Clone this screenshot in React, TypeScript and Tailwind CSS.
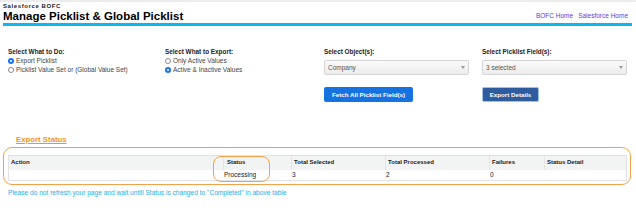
function Radio({ checked, label }: { checked?: boolean; label: string }) {
  return (
    <div className="flex items-center gap-[2px] h-[9px]">
      {checked ? (
        <span className="w-[6px] h-[6px] rounded-full bg-[#1a73e8] flex items-center justify-center">
          <span className="w-[2px] h-[2px] rounded-full bg-white" />
        </span>
      ) : (
        <span className="w-[6px] h-[6px] rounded-full border-[0.5px] border-[#8a8a8a] bg-white" />
      )}
      <span className="text-[6.5px] text-[#444]">{label}</span>
    </div>
  );
}

function Select({ value }: { value: string }) {
  return (
    <div className="mt-[4px] w-[145px] h-[15px] rounded-[2px] border border-[#d4d4d4] bg-gradient-to-b from-[#fafafa] to-[#ececec] flex items-center justify-between px-[3px]">
      <span className="text-[6.5px] text-[#555]">{value}</span>
      <span className="w-0 h-0 border-l-[2.5px] border-r-[2.5px] border-t-[3px] border-l-transparent border-r-transparent border-t-[#999]" />
    </div>
  );
}

const cols = 'grid grid-cols-[214px_68px_94px_104px_55px_1fr]';

export default function App() {
  return (
    <div
      className="w-[636px] h-[208px] bg-white overflow-hidden border-t-2 border-[#ececec]"
      style={{ fontFamily: '"Liberation Sans", Arial, sans-serif' }}
    >
      <div className="flex justify-between items-end px-[3px]">
        <div>
          <div className="text-[6px] font-bold text-[#222] leading-[8px] tracking-[0.6px]">Salesforce BOFC</div>
          <div className="text-[11.5px] font-bold text-black leading-[12px]">Manage Picklist &amp; Global Picklist</div>
        </div>
        <div className="flex gap-[5px] text-[6.5px] text-[#5b3ce6] pr-[5px] pb-[1px]">
          <a>BOFC Home</a>
          <a>Salesforce Home</a>
        </div>
      </div>
      <div className="ml-[3px] w-[629px] h-[3px] bg-[#0cb6f0] mt-[1px]" />

      <div className="grid grid-cols-[157px_159px_158px_1fr] pl-[8px] pt-[21px]">
        <div>
          <div className="text-[6.4px] font-bold text-[#222] leading-[9px]">Select What to Do:</div>
          <Radio checked label="Export Picklist" />
          <Radio label="Picklist Value Set or (Global Value Set)" />
        </div>
        <div>
          <div className="text-[6.4px] font-bold text-[#222] leading-[9px]">Select What to Export:</div>
          <Radio label="Only Active Values" />
          <Radio checked label="Active & Inactive Values" />
        </div>
        <div>
          <div className="text-[6.4px] font-bold text-[#222] leading-[9px]">Select Object(s):</div>
          <Select value="Company" />
          <button className="mt-[12px] w-[89px] h-[15px] rounded-[2px] bg-[#1672e0] text-white text-[6.2px] font-bold">
            Fetch All Picklist Field(s)
          </button>
        </div>
        <div>
          <div className="text-[6.4px] font-bold text-[#222] leading-[9px]">Select Picklist Field(s):</div>
          <Select value="3 selected" />
          <button className="mt-[12px] w-[57px] h-[15px] rounded-[2px] bg-[#2e5c9e] border border-[#9fc0e8] text-white text-[6.2px] font-bold">
            Export Details
          </button>
        </div>
      </div>

      <div className="pl-[16px] pt-[31px] text-[7.8px] font-bold text-[#f7941d] underline leading-[9px]">Export Status</div>

      <div className="mt-[3px] ml-[3px] w-[628px] h-[38px] rounded-[9px] border border-[#f7a04a] pt-[7px] pl-[4px] pr-[3px]">
        <div className="relative border border-[#e2e2e2] text-[6px] text-[#222]">
          <div className={`${cols} h-[14px] bg-[#f2f3f3] font-bold items-center`}>
            <div className="pl-[2px]">Action</div>
            <div className="pl-[3px] border-l border-[#e4e4e4] h-full flex items-center">Status</div>
            <div className="pl-[2px] border-l border-[#e4e4e4] h-full flex items-center">Total Selected</div>
            <div className="pl-[2px] border-l border-[#e4e4e4] h-full flex items-center">Total Processed</div>
            <div className="pl-[2px] border-l border-[#e4e4e4] h-full flex items-center">Failures</div>
            <div className="pl-[2px] border-l border-[#e4e4e4] h-full flex items-center">Status Detail</div>
          </div>
          <div className={`${cols} h-[10px] items-center text-[6.5px]`}>
            <div />
            <div className="pl-[1px]">Processing</div>
            <div className="pl-[1px]">3</div>
            <div className="pl-[1px]">2</div>
            <div className="pl-[1px]">0</div>
            <div />
          </div>
          <div className="absolute left-[204px] top-[0px] w-[57px] h-[26px] rounded-[8px] border border-[#f7a04a]" />
        </div>
      </div>

      <div className="pl-[8px] pt-[3px] text-[6.6px] text-[#1bb0ea]">
        Please do not refresh your page and wait untill Status is changed to "Completed" in above table
      </div>
    </div>
  );
}
